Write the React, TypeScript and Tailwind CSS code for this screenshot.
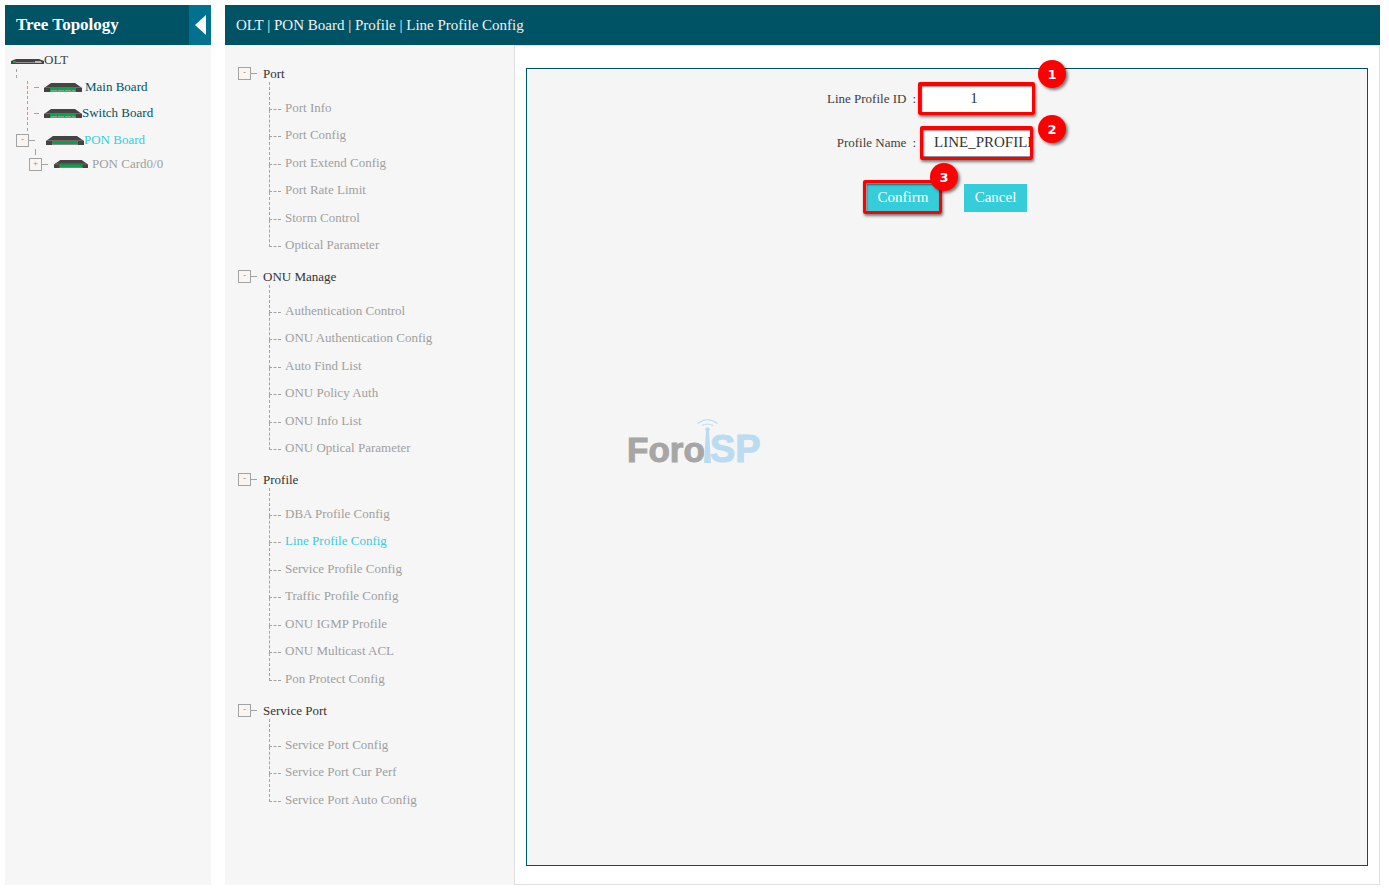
import { useState } from 'react'

interface MenuGroup {
  title: string
  items: string[]
}

const menu: MenuGroup[] = [
  {
    title: 'Port',
    items: ['Port Info', 'Port Config', 'Port Extend Config', 'Port Rate Limit', 'Storm Control', 'Optical Parameter']
  },
  {
    title: 'ONU Manage',
    items: [
      'Authentication Control',
      'ONU Authentication Config',
      'Auto Find List',
      'ONU Policy Auth',
      'ONU Info List',
      'ONU Optical Parameter'
    ]
  },
  {
    title: 'Profile',
    items: [
      'DBA Profile Config',
      'Line Profile Config',
      'Service Profile Config',
      'Traffic Profile Config',
      'ONU IGMP Profile',
      'ONU Multicast ACL',
      'Pon Protect Config'
    ]
  },
  {
    title: 'Service Port',
    items: ['Service Port Config', 'Service Port Cur Perf', 'Service Port Auto Config']
  }
]

function Toggle({ sign, label }: { sign: string; label: string }) {
  return (
    <>
      <button
        type="button"
        aria-label={label}
        className="flex h-[13px] w-[13px] shrink-0 items-start justify-center border border-[#a3a3a3] bg-[#fbf5f2] text-[9px] leading-[8px] text-[#8c8c8c]"
      >
        {sign}
      </button>
      <span className="w-[6px] shrink-0 border-t border-[#a3a3a3]" />
    </>
  )
}

function Branch() {
  return (
    <>
      <span className="flex h-[13px] w-[13px] shrink-0 justify-center bg-[#f8f4f3]">
        <span className="border-l border-dashed border-[#a3a3a3]" />
      </span>
      <span className="w-[5px] shrink-0 border-t border-[#a3a3a3]" />
    </>
  )
}

function Board({ ports = false, className }: { ports?: boolean; className: string }) {
  return (
    <svg viewBox="0 0 38 9" preserveAspectRatio="none" className={`shrink-0 ${className}`} aria-hidden="true">
      <path d="M7 0H31L38 5V9H0V5Z" fill="#474342" />
      <path d="M2 4H36L38 5H0Z" fill="#6f6b6a" />
      <path d="M6 5H32V8H6Z" fill="#0aa04f" />
      {ports && <path d="M7 7.500H31" stroke="#7fa48c" strokeWidth="1" strokeDasharray="6 1" />}
      <path d="M6 8H32V9H6Z" fill="#8a8786" />
    </svg>
  )
}

function Rack() {
  return (
    <svg viewBox="0 0 33 5" className="h-[5px] w-[33px] shrink-0" aria-hidden="true">
      <path d="M5 0H28L33 2V5H0V2Z" fill="#474342" />
      <path d="M5 3H31V4H5Z" fill="#8f8f8f" />
      <path d="M2 2H5V4H2Z" fill="#0aa04f" />
      <path d="M24 2H30V4H24Z" fill="#b5b5b5" />
    </svg>
  )
}

function TreeTopology() {
  return (
    <aside className="flex w-[206px] shrink-0 flex-col bg-[#f6f6f6]">
      <div className="flex h-10 bg-[#005265]">
        <h1 className="flex-1 pl-[11px] text-[17px] leading-[39px] font-bold text-white">Tree Topology</h1>
        <button type="button" aria-label="Collapse tree" className="flex w-[22px] items-center justify-center bg-[#00728f]">
          <svg viewBox="0 0 11 20" className="h-5 w-[11px]" aria-hidden="true">
            <path d="M11 0V20L0 10Z" fill="#fff" />
          </svg>
        </button>
      </div>
      <nav aria-label="Tree topology" className="pt-[6px] text-[13px] leading-[18px]">
        <a href="#olt" className="flex items-center pl-[6px] text-[#404040]">
          <span className="pt-[3px]">
            <Rack />
          </span>
          OLT
        </a>
        <span className="ml-[11px] block h-[9px] border-l border-dashed border-[#a3a3a3]" />
        <div className="flex items-center pl-[16px]">
          <Branch />
          <a href="#main-board" className="ml-[5px] flex items-center gap-[3px] text-[#005265]">
            <Board ports className="h-[9px] w-[38px]" />
            Main Board
          </a>
        </div>
        <span className="ml-[22px] block h-2 border-l border-dashed border-[#a3a3a3]" />
        <div className="flex items-center pl-[16px]">
          <Branch />
          <a href="#switch-board" className="ml-[5px] flex items-center text-[#005265]">
            <Board ports className="h-[9px] w-[38px]" />
            Switch Board
          </a>
        </div>
        <span className="ml-[22px] block h-[9px] border-l border-dashed border-[#a3a3a3]" />
        <div className="flex items-center pl-[11px]">
          <Toggle sign="-" label="Collapse PON Board" />
          <a href="#pon-board" className="ml-[11px] flex items-center text-[#36cddb]">
            <Board className="h-[9px] w-[38px]" />
            PON Board
          </a>
        </div>
        <span className="ml-[30px] block h-[6px] border-l border-[#a3a3a3]" />
        <div className="flex items-center pl-[24px]">
          <Toggle sign="+" label="Expand PON Card0/0" />
          <a href="#pon-card" className="ml-[6px] flex items-center gap-[4px] text-[#a0a0a0]">
            <Board className="h-[8px] w-[34px]" />
            PON Card0/0
          </a>
        </div>
      </nav>
    </aside>
  )
}

function SideMenu({ active }: { active: string }) {
  return (
    <nav aria-label="PON Board" className="w-[289px] shrink-0 bg-[#f6f6f6] pt-[19px] text-[13px]">
      {menu.map((group) => (
        <section key={group.title} className="mb-5 pl-[13px]">
          <div className="flex h-[18px] items-center">
            <Toggle sign="-" label={`Collapse ${group.title}`} />
            <h2 className="ml-[6px] pt-[2px] leading-[18px] text-[#333]">{group.title}</h2>
          </div>
          <ul className="ml-[31px]">
            {group.items.map((item) => (
              <li key={item} className="flex h-[27px] items-end odd:h-[28px]">
                <span className="mr-[4px] h-full w-3 border-b border-l border-dashed border-[#a3a3a3]" />
                <a
                  href="#menu"
                  className={`-mb-[5px] leading-[14px] ${item === active ? 'text-[#36cddb]' : 'text-[#a0a0a0]'}`}
                >
                  {item}
                </a>
              </li>
            ))}
          </ul>
        </section>
      ))}
    </nav>
  )
}

// Red frame drawn over a control, with its step number beside it
function Step({ n, frame, badge }: { n: number; frame: string; badge: string }) {
  return (
    <>
      <span
        className={`pointer-events-none absolute rounded-[2px] border-[3px] border-[#fe0000] shadow-[1px_2px_3px_rgba(0,0,0,0.5),inset_1px_2px_2px_rgba(0,0,0,0.5)] ${frame}`}
      />
      <span
        className={`pointer-events-none absolute z-10 flex h-7 w-7 items-center justify-center rounded-full bg-[#fe0000] font-['DejaVu_Sans',sans-serif] text-[13px] leading-none font-bold text-white shadow-[2px_2px_3px_rgba(0,0,0,0.5)] ${badge}`}
      >
        {n}
      </span>
    </>
  )
}

function Watermark() {
  return (
    <svg
      viewBox="0 0 150 60"
      className="pointer-events-none absolute top-[348px] left-[95px] h-[60px] w-[150px] overflow-visible"
      role="img"
      aria-label="ForoISP"
    >
      <g fontFamily="'Liberation Sans', Arial, sans-serif" fontWeight="bold" strokeWidth="1">
        <text x="5" y="45" fontSize="35" fill="#a6a6a6" stroke="#a6a6a6">
          Foro
        </text>
        <text x="88" y="45" fontSize="38" fill="#bbdcf0" stroke="#bbdcf0">
          SP
        </text>
      </g>
      <path d="M84 14H87L89 46H82Z" fill="#bbdcf0" />
      <circle cx="85.500" cy="12.500" r="2.200" fill="#bbdcf0" />
      <path d="M75.500 6.500Q85.500 -1 95.500 6.500M80 8.500Q85.500 5.500 91 8.500" fill="none" stroke="#bbdcf0" strokeWidth="1.200" />
    </svg>
  )
}

function LineProfileForm() {
  const [profileId, setProfileId] = useState('1')
  const [name, setName] = useState('LINE_PROFILE_1')

  return (
    <form
      onSubmit={(e) => e.preventDefault()}
      className="relative flex flex-1 flex-col items-center border border-[#005265] bg-[#f5f5f5] pt-[16px]"
    >
      <div className="grid grid-cols-[110px_168px] items-center gap-y-4 text-[13px] text-[#404040]">
        <label htmlFor="profile-id" className="flex justify-end gap-[6px] pr-[2px]">
          Line Profile ID <span>:</span>
        </label>
        <div className="relative ml-[3px] h-7 w-[112px]">
          <input
            id="profile-id"
            value={profileId}
            onChange={(e) => setProfileId(e.target.value)}
            className="h-full w-full border border-[#8f8f8f] bg-white pr-[6px] pb-[2px] text-center text-[15px] text-[#333]"
          />
          <Step n={1} frame="-top-[3px] -right-[2px] -bottom-[2px] -left-[3px]" badge="-top-[25px] left-[117px]" />
        </div>
        <label htmlFor="profile-name" className="flex justify-end gap-[6px] pr-[2px]">
          Profile Name <span>:</span>
        </label>
        <div className="relative ml-[3px] h-7 w-[112px]">
          <input
            id="profile-name"
            value={name}
            onChange={(e) => setName(e.target.value)}
            className="h-full w-full border border-[#8f8f8f] bg-white pb-[2px] pl-[12px] text-[15px] text-[#333]"
          />
          <Step n={2} frame="-inset-y-[3px] right-0 -left-[1px]" badge="-top-[14px] left-[117px]" />
        </div>
      </div>
      <div className="mt-[27px] flex gap-[25px] text-[15px] text-white">
        <div className="relative">
          <button type="submit" className="h-7 w-[72px] bg-[#36cddb] pb-[2px]">
            Confirm
          </button>
          <Step n={3} frame="-top-[4px] -right-[3px] -bottom-[2px] -left-[4px]" badge="-top-[21px] left-[63px]" />
        </div>
        <button type="button" className="h-7 w-[63px] bg-[#36cddb] pb-[2px]">
          Cancel
        </button>
      </div>
      <Watermark />
    </form>
  )
}

export default function App() {
  return (
    <div className="flex min-h-screen gap-[14px] bg-white py-[5px] pr-[9px] pl-[5px] font-['Liberation_Serif','Times_New_Roman',serif]">
      <TreeTopology />
      <div className="flex min-w-0 flex-1 flex-col">
        <header className="h-10 bg-[#005265] pl-[11px] text-[15px] leading-10 text-[#f2f2f2]">
          OLT | PON Board | Profile | Line Profile Config
        </header>
        <div className="flex flex-1">
          <SideMenu active="Line Profile Config" />
          <main className="flex flex-1 flex-col border border-[#e0e0e0] px-[11px] pt-[22px] pb-[18px]">
            <LineProfileForm />
          </main>
        </div>
      </div>
    </div>
  )
}
